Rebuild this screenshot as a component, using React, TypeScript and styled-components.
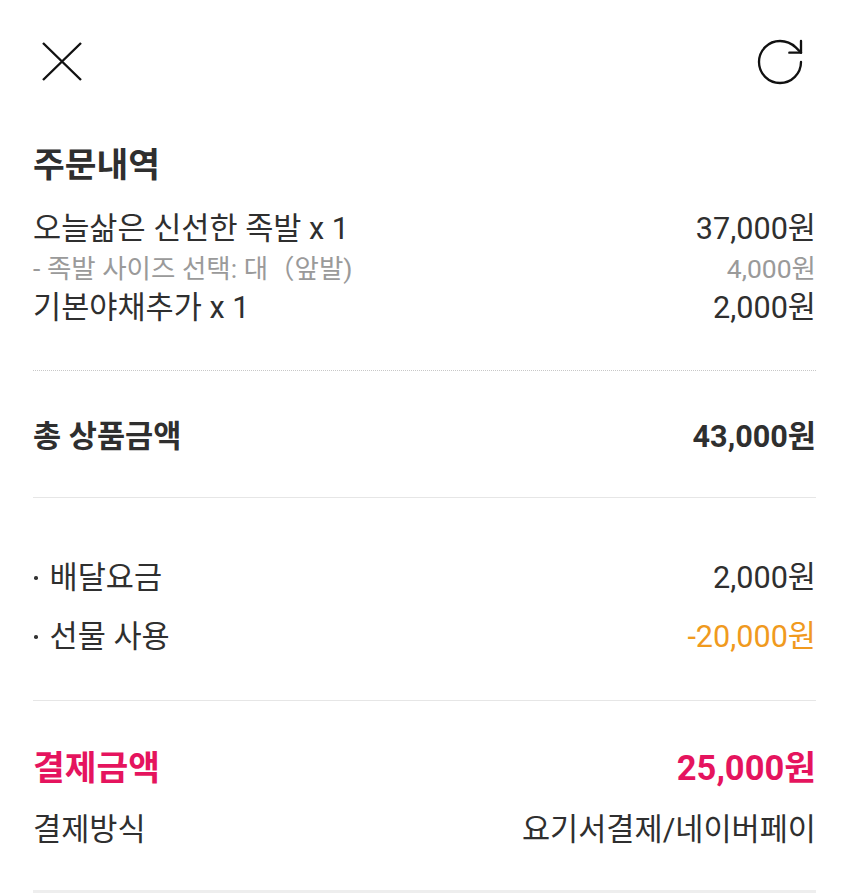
import React from "react";
import styled, { createGlobalStyle } from "styled-components";

const GlobalStyle = createGlobalStyle`
  body {
    margin: 0;
    background: #ffffff;
    font-family: Roboto, "Noto Sans CJK KR", sans-serif;
    color: #2f2f2f;
  }
`;

const items = [
  { name: "오늘삶은 신선한 족발 x 1", price: "37,000원" },
  { name: "- 족발 사이즈 선택: 대（앞발)", price: "4,000원", sub: true },
  { name: "기본야채추가 x 1", price: "2,000원" },
];

const fees = [
  { name: "배달요금", price: "2,000원" },
  { name: "선물 사용", price: "-20,000원", discount: true },
];

export default function App() {
  return (
    <Page>
      <GlobalStyle />
      <Header>
        <IconButton aria-label="close">
          <svg width="40" height="40" viewBox="0 0 40 40">
            <path d="M1 1 L39 38 M39 1 L1 38" stroke="#111" strokeWidth="2.4" fill="none" />
          </svg>
        </IconButton>
        <IconButton aria-label="refresh">
          <svg width="56" height="56" viewBox="0 0 24 24" fill="none" stroke="#111" strokeWidth="1" strokeLinecap="round" strokeLinejoin="round">
            <path d="M21 12a9 9 0 1 1-9-9c2.52 0 4.93 1 6.74 2.74L21 8" />
            <path d="M21 3v5h-5" />
          </svg>
        </IconButton>
      </Header>

      <Content>
        <Title>주문내역</Title>
        <ItemList>
          {items.map((it) => (
            <Row key={it.name} $sub={it.sub}>
              <span>{it.name}</span>
              <span>{it.price}</span>
            </Row>
          ))}
        </ItemList>

        <Divider $dotted $top={42} />

        {/* TOTAL */}
        <TotalRow>
          <span>총 상품금액</span>
          <span>43,000원</span>
        </TotalRow>

        <Divider />

        {/* FEES */}
        <FeeList>
          {fees.map((f) => (
            <Row key={f.name}>
              <Bullet>{f.name}</Bullet>
              <Price $discount={f.discount}>{f.price}</Price>
            </Row>
          ))}
        </FeeList>

        <Divider />

        {/* PAYMENT */}
        <PayRow>
          <span>결제금액</span>
          <span>25,000원</span>
        </PayRow>
        <MethodRow>
          <span>결제방식</span>
          <span>요기서결제/네이버페이</span>
        </MethodRow>

        <Divider $thick />
      </Content>
    </Page>
  );
}

// styles
const Page = styled.div`
  width: 850px;
  min-height: 894px;
  background: #fff;
`;

const Header = styled.header`
  height: 124px;
  display: flex;
  align-items: center;
  justify-content: space-between;
  padding: 0 42px 0 42px;
`;

const IconButton = styled.button`
  border: none;
  background: none;
  padding: 0;
  display: flex;
  align-items: center;
  justify-content: center;
`;

const Content = styled.main`
  padding: 0 34px 0 33px;
`;

const Title = styled.h1`
  margin: 21px 0 0;
  font-size: 34.5px;
  line-height: 40px;
  font-weight: 700;
  color: #2f2f2f;
`;

const ItemList = styled.div`
  margin-top: 24px;
  display: flex;
  flex-direction: column;
`;

const Row = styled.div<{ $sub?: boolean }>`
  display: flex;
  justify-content: space-between;
  align-items: center;
  font-size: ${(p) => (p.$sub ? "26.5px" : "30.6px")};
  line-height: ${(p) => (p.$sub ? "39px" : "40px")};
  color: ${(p) => (p.$sub ? "#9a9a9a" : "#2f2f2f")};
`;

const Divider = styled.hr<{ $dotted?: boolean; $thick?: boolean; $top?: number }>`
  margin: ${(p) => p.$top ?? 0}px 0 0;
  border: none;
  border-top: ${(p) =>
    p.$dotted ? "1px dotted #c8c8c8" : p.$thick ? "3px solid #eeeeee" : "1px solid #e6e6e6"};
`;

const TotalRow = styled.div`
  display: flex;
  justify-content: space-between;
  align-items: center;
  margin: 46px 0 40px;
  font-size: 30.6px;
  line-height: 40px;
  font-weight: 700;
`;

const FeeList = styled.div`
  display: flex;
  flex-direction: column;
  gap: 19px;
  margin: 60px 0 43px;
`;

const Bullet = styled.span`
  display: flex;
  align-items: center;
  &::before {
    content: "";
    width: 3.5px;
    height: 3.5px;
    border-radius: 50%;
    background: #333;
    margin: 0 12px 0 1px;
  }
`;

const Price = styled.span<{ $discount?: boolean }>`
  color: ${(p) => (p.$discount ? "#f09a1e" : "#2f2f2f")};
`;

const PayRow = styled.div`
  display: flex;
  justify-content: space-between;
  align-items: center;
  margin-top: 47px;
  font-size: 34.5px;
  line-height: 40px;
  font-weight: 700;
  color: #e5145e;
`;

const MethodRow = styled.div`
  display: flex;
  justify-content: space-between;
  align-items: center;
  margin: 22px 0 40px;
  font-size: 30.6px;
  line-height: 40px;
`;
